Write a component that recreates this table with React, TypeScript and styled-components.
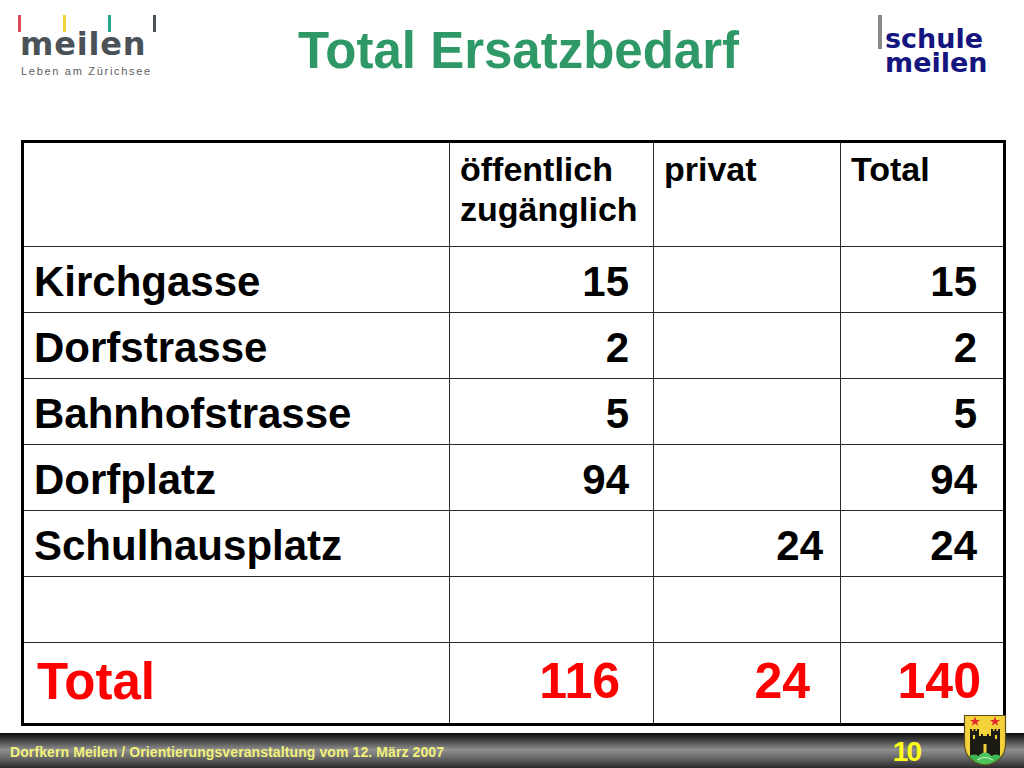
import React from 'react';
import styled, { createGlobalStyle } from 'styled-components';

const GlobalStyle = createGlobalStyle`
  * {
    box-sizing: border-box;
  }
  body {
    margin: 0;
    background: #ffffff;
    font-family: 'Liberation Sans', Arial, sans-serif;
  }
`;

type Row = { label: string; pub: string; priv: string; total: string };

const rows: Row[] = [
  { label: 'Kirchgasse', pub: '15', priv: '', total: '15' },
  { label: 'Dorfstrasse', pub: '2', priv: '', total: '2' },
  { label: 'Bahnhofstrasse', pub: '5', priv: '', total: '5' },
  { label: 'Dorfplatz', pub: '94', priv: '', total: '94' },
  { label: 'Schulhausplatz', pub: '', priv: '24', total: '24' },
  { label: '', pub: '', priv: '', total: '' }
];

const SHIELD = 'M1.5 1.5 H42.5 V30 C42.5 42 34 50 22 51 C10 50 1.5 42 1.5 30 Z';

const Crest: React.FC = () => (
  <CrestBox>
    <svg width='44' height='52' viewBox='0 0 44 52'>
      <defs>
        <clipPath id='shield'>
          <path d={SHIELD} />
        </clipPath>
      </defs>
      <path d={SHIELD} fill='#f4d23c' />
      <g clipPath='url(#shield)'>
        <polygon
          points='12,2.5 13.3,6 17,6 14,8.2 15.2,11.8 12,9.6 8.8,11.8 10,8.2 7,6 10.7,6'
          fill='#e3262b'
        />
        <polygon
          points='32,2.5 33.3,6 37,6 34,8.2 35.2,11.8 32,9.6 28.8,11.8 30,8.2 27,6 30.7,6'
          fill='#e3262b'
        />
        <path
          d='M7 15 H9 V17 H10.5 V15 H12.5 V17 H14 V15 H16 V22 H18 V20 H20 V22 H24 V20 H26 V22 H28 V15 H30 V17 H31.5 V15 H33.5 V17 H35 V15 H37 V42 H7 Z'
          fill='#1c1c14'
        />
        <rect x='10' y='21' width='2' height='4' fill='#f4d23c' />
        <rect x='32' y='21' width='2' height='4' fill='#f4d23c' />
        <rect x='20.5' y='30' width='3' height='12' fill='#f4d23c' />
        <circle cx='11' cy='48' r='7.5' fill='#3fb650' />
        <circle cx='33' cy='48' r='7.5' fill='#3fb650' />
        <circle cx='22' cy='46' r='7.5' fill='#4cc45c' />
        <path d='M14 46 Q22 41 30 46' stroke='#eafbe8' strokeWidth='0.8' fill='none' />
      </g>
      <path d={SHIELD} fill='none' stroke='#5c4e16' strokeWidth='1.2' />
    </svg>
  </CrestBox>
);

const App: React.FC = () => {
  return (
    <>
      <GlobalStyle />
      <Page>
        <Header>
          <MeilenLogo>
            <Bars>
              <Bar $color='#d84a5c' />
              <Bar $color='#f1d23b' />
              <Bar $color='#2ba58e' />
              <Bar $color='#4b5359' />
            </Bars>
            <MeilenWord>meilen</MeilenWord>
            <Tagline>Leben am Zürichsee</Tagline>
          </MeilenLogo>
          <Title>Total Ersatzbedarf</Title>
          <SchuleLogo>
            <SchuleBar />
            <SchuleWord>
              <SchuleLine>schule</SchuleLine>
              <SchuleLine>meilen</SchuleLine>
            </SchuleWord>
          </SchuleLogo>
        </Header>

        <TableWrap>
          <Table>
            <colgroup>
              <col style={{ width: 426 }} />
              <col style={{ width: 204 }} />
              <col style={{ width: 187 }} />
              <col style={{ width: 162 }} />
            </colgroup>
            <tbody>
              <HeadRow>
                <HeadCell />
                <HeadCell>
                  öffentlich
                  <br />
                  zugänglich
                </HeadCell>
                <HeadCell>privat</HeadCell>
                <HeadCell $last>Total</HeadCell>
              </HeadRow>
              {rows.map((r, i) => (
                <BodyRow key={i}>
                  <LabelCell>{r.label}</LabelCell>
                  <NumCell $pad={24}>{r.pub}</NumCell>
                  <NumCell $pad={17}>{r.priv}</NumCell>
                  <NumCell $pad={26} $last>
                    {r.total}
                  </NumCell>
                </BodyRow>
              ))}
              <TotalRow>
                <TotalLabel>Total</TotalLabel>
                <TotalNum $pad={33}>116</TotalNum>
                <TotalNum $pad={30}>24</TotalNum>
                <TotalNum $pad={22} $last>
                  140
                </TotalNum>
              </TotalRow>
            </tbody>
          </Table>
        </TableWrap>

        <Footer>
          <FooterText>Dorfkern Meilen / Orientierungsveranstaltung vom 12. März 2007</FooterText>
          <PageNumber>10</PageNumber>
        </Footer>

        <Crest />
      </Page>
    </>
  );
};

export default App;

const Page = styled.div`
  position: relative;
  width: 1024px;
  height: 768px;
  overflow: hidden;
  background: #ffffff;
`;

const Header = styled.div`
  display: flex;
  align-items: flex-start;
  height: 140px;
`;

const MeilenLogo = styled.div`
  flex-shrink: 0;
  width: 160px;
  margin-left: 17px;
  padding-top: 15px;
  display: flex;
  flex-direction: column;
`;

const Bars = styled.div`
  display: flex;
  gap: 42px;
  height: 17px;
  padding-left: 1px;
`;

const Bar = styled.span<{ $color: string }>`
  flex-shrink: 0;
  width: 3px;
  height: 17px;
  background: ${(p) => p.$color};
`;

const MeilenWord = styled.div`
  margin-top: -3px;
  padding-left: 3px;
  font-family: 'DejaVu Sans', 'Open Sans', sans-serif;
  font-weight: 700;
  font-size: 32px;
  line-height: 30px;
  letter-spacing: 0.8px;
  color: #4a5258;
`;

const Tagline = styled.div`
  margin-top: 6px;
  padding-left: 4px;
  font-family: 'Liberation Sans', Arial, sans-serif;
  font-size: 11px;
  line-height: 12px;
  letter-spacing: 1.7px;
  color: #5a5f63;
`;

const Title = styled.h1`
  flex: 1;
  margin: 0;
  padding: 25px 18px 0 0;
  text-align: center;
  font-family: 'Liberation Sans', Arial, sans-serif;
  font-weight: 700;
  font-size: 51px;
  line-height: 51px;
  color: #2e9966;
`;

const SchuleLogo = styled.div`
  flex-shrink: 0;
  display: flex;
  align-items: flex-start;
  width: 112px;
  margin-right: 34px;
`;

const SchuleBar = styled.span`
  flex-shrink: 0;
  width: 4px;
  height: 34px;
  margin-top: 15px;
  background: #8a8a8a;
`;

const SchuleWord = styled.div`
  margin-top: 27px;
  margin-left: 3px;
  font-family: 'DejaVu Sans', Verdana, sans-serif;
  font-weight: 700;
  font-size: 27px;
  color: #15157f;
  white-space: nowrap;
`;

const SchuleLine = styled.div`
  height: 24px;
  line-height: 24px;
`;

const TableWrap = styled.div`
  padding-left: 21px;
`;

const Table = styled.table`
  width: 985px;
  table-layout: fixed;
  border-collapse: separate;
  border-spacing: 0;
  border: 3px solid #000000;
  font-family: 'Liberation Sans', Arial, sans-serif;
  font-weight: 700;
  color: #000000;
`;

const HeadRow = styled.tr`
  height: 104px;
`;

const BodyRow = styled.tr`
  height: 66px;
`;

const TotalRow = styled.tr`
  height: 80px;
`;

const cellLines = `
  border-right: 1px solid #2a2a2a;
  border-bottom: 1px solid #2a2a2a;
  padding: 0;
`;

const HeadCell = styled.td<{ $last?: boolean }>`
  ${cellLines}
  ${(p) => (p.$last ? 'border-right: none;' : '')}
  vertical-align: top;
  padding: 6px 0 0 10px;
  font-size: 34px;
  line-height: 40px;
`;

const LabelCell = styled.td`
  ${cellLines}
  vertical-align: middle;
  padding: 4px 0 0 10px;
  font-size: 42px;
  white-space: nowrap;
`;

const NumCell = styled.td<{ $pad: number; $last?: boolean }>`
  ${cellLines}
  ${(p) => (p.$last ? 'border-right: none;' : '')}
  vertical-align: middle;
  text-align: right;
  padding: 4px ${(p) => p.$pad}px 0 0;
  font-size: 42px;
`;

const TotalLabel = styled.td`
  border-right: 1px solid #2a2a2a;
  vertical-align: middle;
  padding: 0 0 4px 13px;
  font-size: 51px;
  color: #ff0000;
`;

const TotalNum = styled.td<{ $pad: number; $last?: boolean }>`
  border-right: ${(p) => (p.$last ? 'none' : '1px solid #2a2a2a')};
  vertical-align: middle;
  text-align: right;
  padding: 0 ${(p) => p.$pad}px 4px 0;
  font-size: 50px;
  color: #ff0000;
`;

const Footer = styled.div`
  display: flex;
  align-items: center;
  justify-content: space-between;
  height: 35px;
  margin-top: 7px;
  padding: 2px 104px 0 10px;
  background: linear-gradient(
    to bottom,
    #0a0a0a 0%,
    #3a3a3a 18%,
    #8f8f8f 48%,
    #6a6a6a 70%,
    #2a2a2a 100%
  );
`;

const FooterText = styled.span`
  font-family: 'Liberation Sans', Arial, sans-serif;
  font-weight: 700;
  font-size: 14px;
  letter-spacing: 0.1px;
  color: #f2f27a;
`;

const PageNumber = styled.span`
  font-family: 'Liberation Sans', Arial, sans-serif;
  font-weight: 700;
  font-size: 28px;
  line-height: 28px;
  letter-spacing: -2px;
  color: #ffff1a;
`;

const CrestBox = styled.div`
  position: absolute;
  left: 963px;
  top: 714px;
  width: 44px;
  height: 52px;
`;
